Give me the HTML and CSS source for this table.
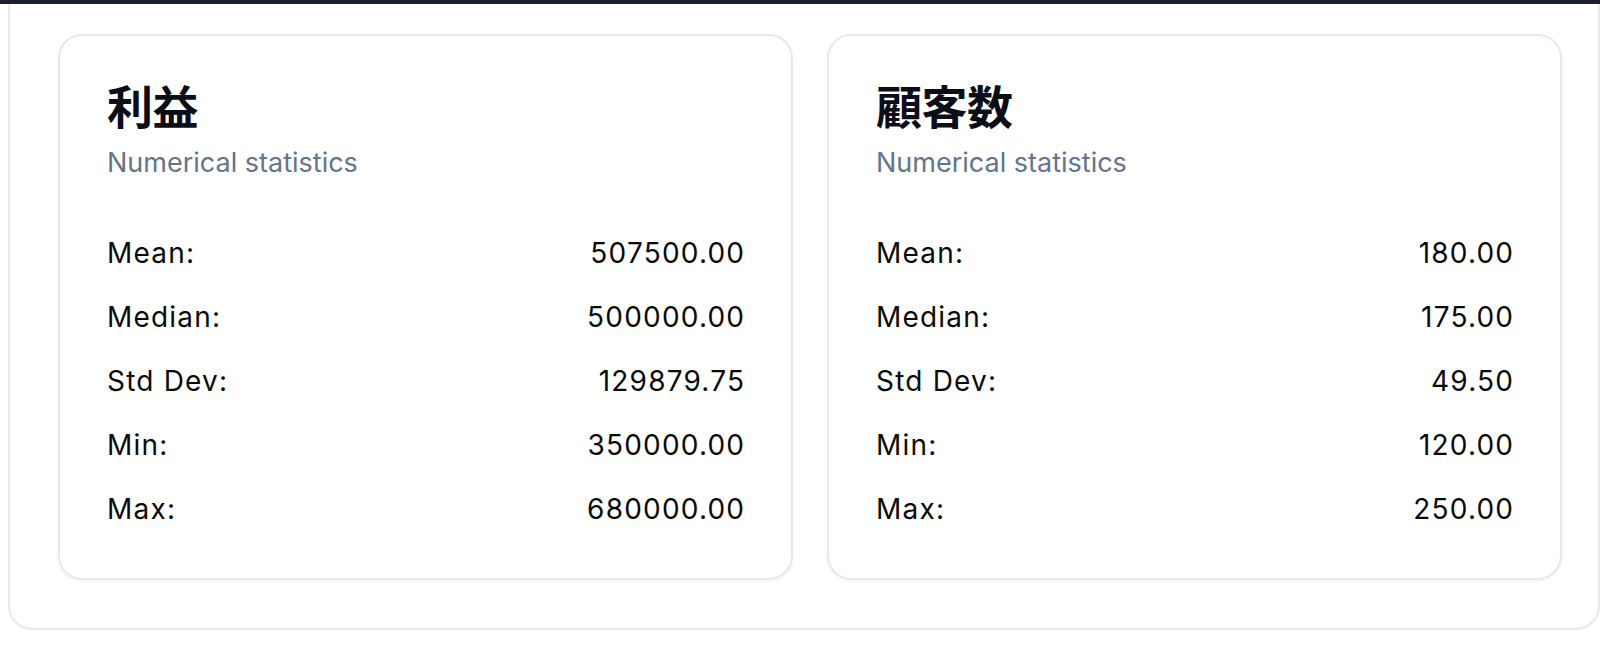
FILE: index.html
```html
<!DOCTYPE html>
<html lang="ja">
<head>
<meta charset="utf-8">
<link rel="stylesheet" href="styles.css">
</head>
<body>
<div class="topbar"></div>
<section class="panel">
  <div class="grid">
    <div class="card">
      <div class="card-header">
        <h3 class="card-title">利益</h3>
        <p class="card-desc">Numerical statistics</p>
      </div>
      <div class="card-content">
        <div class="row"><span>Mean:</span><span>507500.00</span></div>
        <div class="row"><span>Median:</span><span>500000.00</span></div>
        <div class="row"><span>Std Dev:</span><span>129879.75</span></div>
        <div class="row"><span>Min:</span><span>350000.00</span></div>
        <div class="row"><span>Max:</span><span>680000.00</span></div>
      </div>
    </div>
    <div class="card">
      <div class="card-header">
        <h3 class="card-title">顧客数</h3>
        <p class="card-desc">Numerical statistics</p>
      </div>
      <div class="card-content">
        <div class="row"><span>Mean:</span><span>180.00</span></div>
        <div class="row"><span>Median:</span><span>175.00</span></div>
        <div class="row"><span>Std Dev:</span><span>49.50</span></div>
        <div class="row"><span>Min:</span><span>120.00</span></div>
        <div class="row"><span>Max:</span><span>250.00</span></div>
      </div>
    </div>
  </div>
</section>
</body>
</html>
```

FILE: styles.css
```css
* { box-sizing: border-box; }
html, body { margin: 0; padding: 0; background: #ffffff; }
body {
  font-family: Inter, "Noto Sans CJK JP", sans-serif;
  color: #020817;
  overflow: hidden;
}
.topbar {
  height: 4px;
  background: #1b1e2e;
}
.panel {
  margin-left: 8px;
  width: 1592px;
  border: 2px solid #e4e8f1;
  border-top: none;
  border-radius: 0 0 24px 24px;
  padding: 30px 36px 48px 48px;
}
.grid {
  display: grid;
  grid-template-columns: 735px 735px;
  column-gap: 34px;
}
.card {
  border: 2px solid #e4e8f1;
  border-radius: 24px;
  background: #fff;
  box-shadow: 0 2px 4px rgba(15, 23, 42, 0.04);
}
.card-header {
  padding: 44px 47px 48px 47px;
  display: flex;
  flex-direction: column;
  gap: 15px;
}
.card-title {
  margin: 0;
  font-family: "Noto Sans CJK JP", sans-serif;
  font-size: 46px;
  font-weight: 700;
  line-height: 48px;
  letter-spacing: -0.5px;
  color: #0b0d17;
}
.card-desc {
  margin: 0;
  font-size: 27px;
  line-height: 40px;
  color: #64748b;
}
.card-content {
  padding: 2px 47px 49px 47px;
  display: flex;
  flex-direction: column;
  gap: 24px;
}
.row {
  display: flex;
  justify-content: space-between;
  font-size: 28px;
  line-height: 40px;
  letter-spacing: 1.2px;
  color: #0a0a0a;
}
.row span:last-child {
  margin-right: -1.2px;
}
```
